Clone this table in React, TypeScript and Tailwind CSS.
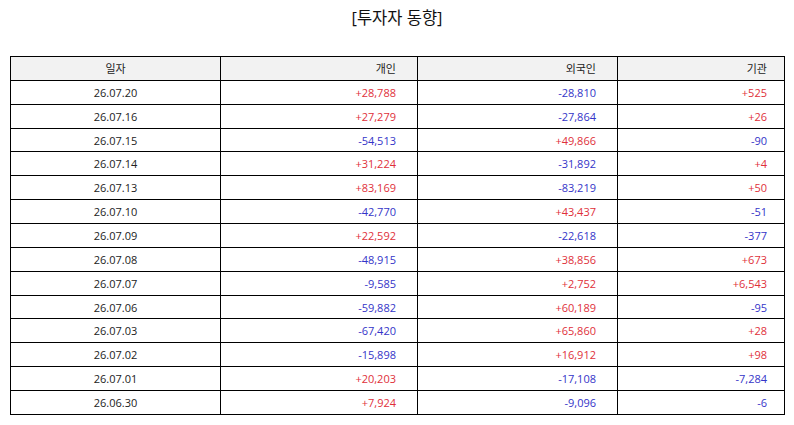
import React from "react";

type Row = [string, string, string, string];

const rows: Row[] = [
  ["26.07.20", "+28,788", "-28,810", "+525"],
  ["26.07.16", "+27,279", "-27,864", "+26"],
  ["26.07.15", "-54,513", "+49,866", "-90"],
  ["26.07.14", "+31,224", "-31,892", "+4"],
  ["26.07.13", "+83,169", "-83,219", "+50"],
  ["26.07.10", "-42,770", "+43,437", "-51"],
  ["26.07.09", "+22,592", "-22,618", "-377"],
  ["26.07.08", "-48,915", "+38,856", "+673"],
  ["26.07.07", "-9,585", "+2,752", "+6,543"],
  ["26.07.06", "-59,882", "+60,189", "-95"],
  ["26.07.03", "-67,420", "+65,860", "+28"],
  ["26.07.02", "-15,898", "+16,912", "+98"],
  ["26.07.01", "+20,203", "-17,108", "-7,284"],
  ["26.06.30", "+7,924", "-9,096", "-6"],
];

function Num({ v }: { v: string }) {
  const cls = v.startsWith("+") ? "text-[#e0303a]" : "text-[#3434c8]";
  return <span className={cls}>{v}</span>;
}

export default function App() {
  return (
    <div
      className="w-[794px] h-[425px] bg-white text-[#222]"
      style={{ fontFamily: '"Open Sans", "Noto Sans CJK KR", sans-serif' }}
    >
      <div className="h-[56px] pt-[5px] text-center text-[16.5px] leading-[26px] text-[#111]">
        [투자자 동향]
      </div>
      <div className="px-[10px]">
        <table className="w-[774px] border-collapse table-fixed text-[11px] leading-none">
          <colgroup>
            <col className="w-[210px]" />
            <col className="w-[197px]" />
            <col className="w-[200px]" />
            <col className="w-[167px]" />
          </colgroup>
          <thead>
            <tr className="h-[23.86px] bg-[#f2f2f2]">
              <th className="border border-black font-normal text-center">일자</th>
              <th className="border border-black font-normal text-right pr-[21px]">개인</th>
              <th className="border border-black font-normal text-right pr-[21px]">외국인</th>
              <th className="border border-black font-normal text-right pr-[17px]">기관</th>
            </tr>
          </thead>
          <tbody>
            {rows.map((r) => (
              <tr key={r[0]} className="h-[23.86px]">
                <td className="border border-black text-center">{r[0]}</td>
                <td className="border border-black text-right pr-[21px]"><Num v={r[1]} /></td>
                <td className="border border-black text-right pr-[21px]"><Num v={r[2]} /></td>
                <td className="border border-black text-right pr-[17px]"><Num v={r[3]} /></td>
              </tr>
            ))}
          </tbody>
        </table>
      </div>
    </div>
  );
}
